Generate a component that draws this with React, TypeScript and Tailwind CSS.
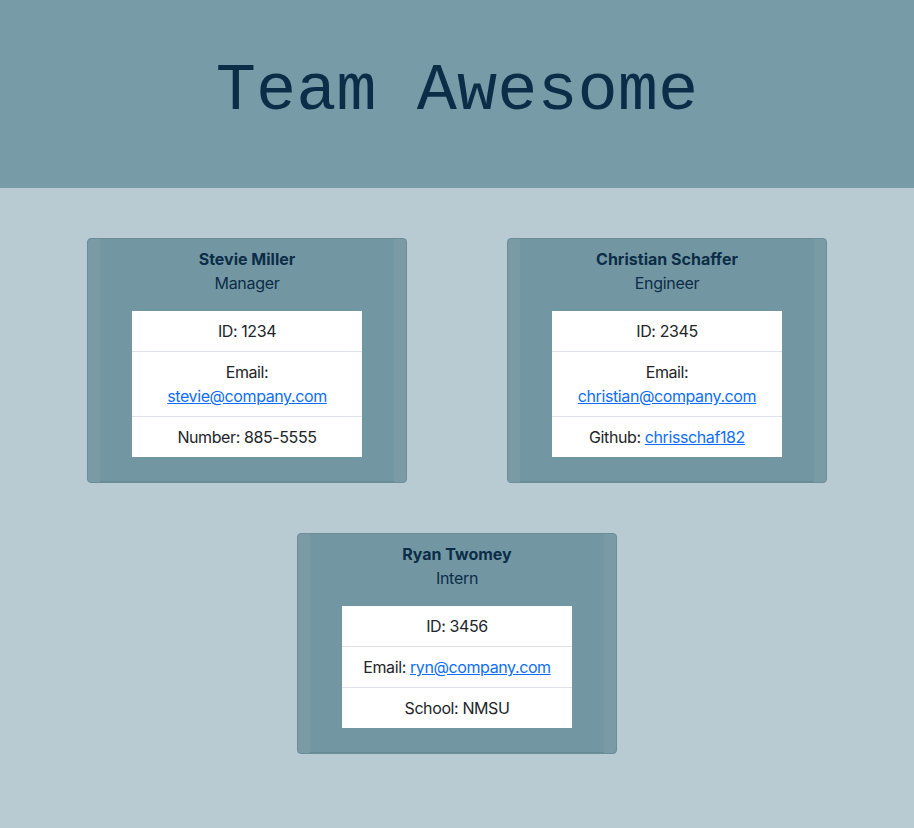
const team = [
  {
    name: "Stevie Miller",
    role: "Manager",
    id: "1234",
    email: "stevie@company.com",
    wrapEmail: true,
    extraLabel: "Number",
    extra: "885-5555",
    link: false,
  },
  {
    name: "Christian Schaffer",
    role: "Engineer",
    id: "2345",
    email: "christian@company.com",
    wrapEmail: true,
    extraLabel: "Github",
    extra: "chrisschaf182",
    link: true,
  },
  {
    name: "Ryan Twomey",
    role: "Intern",
    id: "3456",
    email: "ryn@company.com",
    wrapEmail: false,
    extraLabel: "School",
    extra: "NMSU",
    link: false,
  },
];

type Member = (typeof team)[number];

const Card = ({ m }: { m: Member }) => {
  return (
    <div className="w-[320px] rounded border border-[#6c8d98] bg-[#7a9ba6] px-[12px]">
      <div className="flex flex-col items-center border-b border-[#6a8b96] bg-[#7397a2] pt-[8px] pb-[24px] text-[#0b2d47]">
        <div className="text-base leading-6 font-bold">{m.name}</div>
        <div className="text-base leading-6 tracking-[-0.3px]">{m.role}</div>
        <ul className="mt-[16px] w-[230px] divide-y divide-[#dee2e6] bg-white text-center text-base leading-6 tracking-[-0.4px] text-[#212529]">
          <li className="py-2">ID: {m.id}</li>
          <li className="py-2">
            Email:{m.wrapEmail ? <br /> : " "}
            <a href="#" className="text-[#0d6efd] underline">
              {m.email}
            </a>
          </li>
          <li className="py-2">
            {m.extraLabel}:{" "}
            {m.link ? (
              <a href="#" className="text-[#0d6efd] underline">
                {m.extra}
              </a>
            ) : (
              m.extra
            )}
          </li>
        </ul>
      </div>
    </div>
  );
};

export default function App() {
  return (
    <div className="min-h-[828px] bg-[#b8cbd2] font-['Inter',sans-serif]">
      <header className="flex h-[188px] items-center justify-center bg-[#789ca7] pb-[6px]">
        <h1 className="font-['Liberation_Mono','Courier_New',monospace] text-[67px] leading-none text-[#0b2d47]">
          Team Awesome
        </h1>
      </header>
      <main className="flex flex-wrap justify-center gap-x-[100px] gap-y-[50px] px-[87px] pt-[50px] pb-[50px]">
        {team.map((m) => (
          <Card key={m.name} m={m} />
        ))}
      </main>
    </div>
  );
}
